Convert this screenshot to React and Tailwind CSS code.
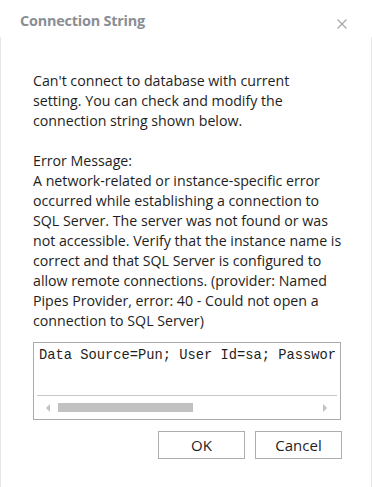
export default function App() {
  const font = { fontFamily: '"Open Sans", "Noto Sans", sans-serif' };
  const lines1 = [
    "Can't connect to database with current",
    "setting. You can check and modify the",
    "connection string shown below.",
  ];
  const lines2 = [
    "Error Message:",
    "A network-related or instance-specific error",
    "occurred while establishing a connection to",
    "SQL Server. The server was not found or was",
    "not accessible. Verify that the instance name is",
    "correct and that SQL Server is configured to",
    "allow remote connections. (provider: Named",
    "Pipes Provider, error: 40 - Could not open a",
    "connection to SQL Server)",
  ];
  return (
    <div className="w-[372px] h-[487px] bg-white flex flex-col overflow-hidden" style={font}>
      <div className="h-[37px] shrink-0 flex items-center justify-between pl-[20px] pr-[25px] pt-[5px]">
        <span className="text-[14.4px] font-bold text-[#8a8e94] tracking-[-0.2px]">Connection String</span>
        <svg width="10" height="10" viewBox="0 0 10 10" className="mt-[5px]">
          <path d="M0.5 0.5 L9.5 9.5 M9.5 0.5 L0.5 9.5" stroke="#a6a6a6" strokeWidth="1.2" />
        </svg>
      </div>
      <div className="flex-1 border-l border-r border-[#e6e6e6] pt-[34px] pl-[32px] pr-[30px] flex flex-col">
        <div className="text-[14.2px] leading-[20px] text-[#1e1e1e]">
          {lines1.map((l, i) => (
            <div key={i} className="whitespace-nowrap">{l}</div>
          ))}
          <div className="h-[20px]" />
          {lines2.map((l, i) => (
            <div key={i} className="whitespace-nowrap">{l}</div>
          ))}
        </div>
        <div className="mt-[11px] w-[308px] h-[78px] border border-[#ababab] flex flex-col overflow-hidden">
          <div className="flex-1 pl-[5px] pt-[4px] overflow-hidden">
            <div
              className="whitespace-nowrap text-[13.75px] leading-[18px] text-[#1e1e1e]"
              style={{ fontFamily: '"Liberation Mono", monospace' }}
            >
              Data Source=Pun; User Id=sa; Passwor
            </div>
          </div>
          <div className="mx-[3px] h-px bg-[#c8c8c8]" />
          <div className="h-[23px] flex items-center pl-[12px] pr-[13px]">
            <svg width="4" height="8" viewBox="0 0 4 8">
              <path d="M4 0 L0 4 L4 8 Z" fill="#c2c2c2" />
            </svg>
            <div className="ml-[8px] w-[135px] h-[9px] bg-[#c1c1c1]" />
            <div className="flex-1" />
            <svg width="4" height="8" viewBox="0 0 4 8">
              <path d="M0 0 L4 4 L0 8 Z" fill="#c2c2c2" />
            </svg>
          </div>
        </div>
        <div className="mt-[11px] flex justify-end gap-[10px] w-[309px]">
          <button className="w-[87px] h-[28px] border border-[#adadad] bg-white text-[15px] text-[#1e1e1e]">OK</button>
          <button className="w-[87px] h-[28px] border border-[#adadad] bg-white text-[15px] text-[#1e1e1e]">Cancel</button>
        </div>
      </div>
    </div>
  );
}
